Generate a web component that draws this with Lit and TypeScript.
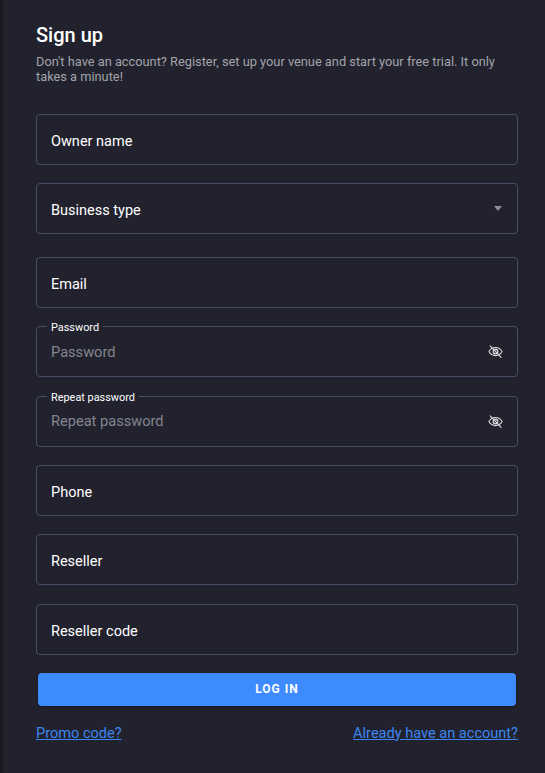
import { LitElement, html, css } from "lit";
import { customElement } from "lit/decorators.js";

const eyeOff = html`<svg class="eye" viewBox="0 0 24 24" width="15" height="15" fill="none" stroke="currentColor" stroke-width="1.8" stroke-linecap="round" stroke-linejoin="round">
  <path d="M1.5 12C4 7.500 7.700 5.500 12 5.500s8 2 10.500 6.500C20 16.500 16.300 18.500 12 18.500S4 16.500 1.500 12Z"/>
  <circle cx="12" cy="12" r="3.800"/>
  <path d="M3.500 3 21 21.500"/>
  <path d="M9.500 9 15 14.800M8.500 12.500l3 3M12.500 8.500l3 3" stroke-width="1.200"/>
</svg>`;

@customElement("app-root")
export class AppRoot extends LitElement {
  static styles = css`
    :host {
      display: block;
      width: 545px;
      height: 773px;
      overflow: hidden;
      box-sizing: border-box;
      background: #21222d;
      border-left: 3px solid #191922;
      padding: 21px 27px 0 33px;
      font-family: Roboto, "Liberation Sans", sans-serif;
      color: #fff;
    }
    h1 {
      margin: 0;
      font-size: 20px;
      line-height: 28px;
      font-weight: 500;
    }
    .sub {
      margin: 5px 0 0;
      width: 470px;
      font-size: 12.8px;
      line-height: 15px;
      color: #a3a3ab;
    }
    .fields {
      margin-top: 30px;
      display: flex;
      flex-direction: column;
    }
    .field {
      position: relative;
      box-sizing: border-box;
      height: 51px;
      margin-bottom: 18.33px;
      border: 1px solid #4d4c66;
      border-radius: 4px;
      padding: 0 14px;
      display: flex;
      align-items: center;
      justify-content: space-between;
      font-size: 14px;
    }
    .field.wide {
      margin-bottom: 22.67px;
    }
    .value {
      font-size: 14.5px;
      color: #fff;
      padding-top: 4px;
    }
    .ph {
      font-size: 14.6px;
      color: #85858d;
    }
    .float {
      position: absolute;
      left: 10px;
      top: -6px;
      padding: 0 4px;
      background: #21222d;
      font-size: 10.9px;
      line-height: 13px;
      color: #fff;
    }
    .caret {
      width: 0;
      height: 0;
      border-left: 4.5px solid transparent;
      border-right: 4.5px solid transparent;
      border-top: 5.5px solid #8d8d95;
      margin-right: 1px;
    }
    .eye {
      color: #d8d8dc;
    }
    button {
      display: block;
      width: 478px;
      height: 33px;
      margin: 0 0 0 2px;
      border: 0;
      border-radius: 4px;
      background: #3d8bff;
      color: #fff;
      font: 700 12px Roboto, "Liberation Sans", sans-serif;
      letter-spacing: 1px;
      box-shadow: 0 1px 3px rgba(0, 0, 0, 0.35);
    }
    .links {
      margin-top: 19px;
      display: flex;
      justify-content: space-between;
      font-size: 14.55px;
      line-height: 18px;
    }
    a {
      color: #3d86f2;
      text-decoration: underline;
    }
  `;

  private plain(label: string) {
    return html`<div class="field"><span class="value">${label}</span></div>`;
  }

  private secret(label: string) {
    return html`<div class="field">
      <span class="float">${label}</span>
      <span class="ph">${label}</span>
      ${eyeOff}
    </div>`;
  }

  render() {
    return html`
      <h1>Sign up</h1>
      <p class="sub">Don't have an account? Register, set up your venue and start your free trial. It only takes a minute!</p>
      <div class="fields">
        ${this.plain("Owner name")}
        <div class="field wide"><span class="value">Business type</span><span class="caret"></span></div>
        ${this.plain("Email")}
        ${this.secret("Password")}
        ${this.secret("Repeat password")}
        ${this.plain("Phone")}
        ${this.plain("Reseller")}
        ${this.plain("Reseller code")}
      </div>
      <button>LOG IN</button>
      <div class="links">
        <a href="#">Promo code?</a>
        <a href="#">Already have an account?</a>
      </div>
    `;
  }
}
